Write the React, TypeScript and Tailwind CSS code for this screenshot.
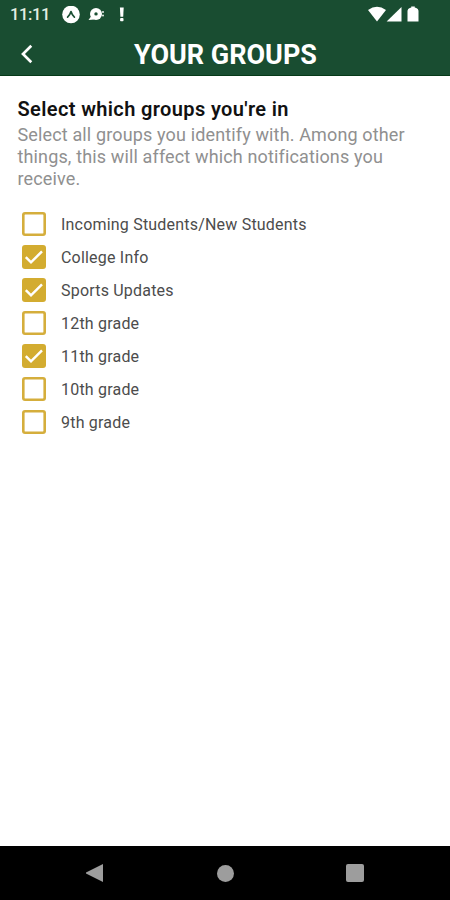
type Group = { label: string; checked: boolean };

const groups: Group[] = [
  { label: "Incoming Students/New Students", checked: false },
  { label: "College Info", checked: true },
  { label: "Sports Updates", checked: true },
  { label: "12th grade", checked: false },
  { label: "11th grade", checked: true },
  { label: "10th grade", checked: false },
  { label: "9th grade", checked: false },
];

function StatusBar() {
  return (
    <div className="flex h-[30px] items-center pl-[10px] pr-[30px]">
      <span className="w-[52px] text-[16.5px] font-medium leading-[30px] tracking-[-0.4px] text-[#e4eee4]">11:11</span>
      <svg className="h-[18px] w-[64px]" viewBox="0 0 64 18" fill="none">
        <circle cx="9" cy="8.5" r="8.8" fill="#fff" />
        <path d="M5.6 11.1 Q8 9 9 5.5 Q10 9 12.4 11.1" stroke="#1b5034" strokeWidth="1.7" strokeLinecap="round" strokeLinejoin="round" />
        <circle cx="34" cy="7.9" r="6" fill="#fff" />
        <path d="M29 10.5L26.5 14L32 13.5Z" fill="#fff" />
        <circle cx="34" cy="7.9" r="1.7" fill="#1b5034" />
        <circle cx="41" cy="6" r="0.9" fill="#fff" />
        <circle cx="41" cy="9.5" r="0.9" fill="#fff" />
        <path d="M57.9 1.5h3.8l-.5 9.3h-2.8z" fill="#fff" />
        <rect x="58.1" y="12.1" width="3.4" height="3.2" rx="0.8" fill="#fff" />
      </svg>
      <svg className="ml-auto h-[18px] w-[52px]" viewBox="0 0 52 18" fill="#fff">
        <path d="M0 4Q9 -2.6 18 4L9 15.500Z" />
        <path d="M33.500 1V15.500H18.600Z" />
        <path d="M43.200 .5h3.600v1.200h1q2.700 1 2.700 3V15.500h-11V4.700q0-2 2.700-3h1z" />
      </svg>
    </div>
  );
}

function Header() {
  return (
    <header className="h-[76px] border-b border-[#063918] bg-[#194d31] text-white">
      <StatusBar />
      <div className="grid h-[46px] grid-cols-[54px_1fr_54px] items-center">
        <svg className="ml-[20px] mt-px h-[20px] w-[14px]" viewBox="0 0 14 20" fill="none">
          <path d="M11.3 1.8L3 10L11.3 18.2" stroke="#fff" strokeWidth="2.7" />
        </svg>
        <h1 className="whitespace-nowrap pl-px pt-1 text-center text-[27px] font-bold leading-[32px]">
          YOUR GROUPS
        </h1>
      </div>
    </header>
  );
}

function Checkbox({ checked }: { checked: boolean }) {
  if (!checked) {
    return <span className="size-6 rounded-[3px] bg-white inset-shadow-[0_0_0_2.6px_#d5ae3c]" />;
  }
  return (
    <span className="size-6 rounded-[3px] bg-[#d3ac30]">
      <svg viewBox="0 0 24 24" fill="none" className="size-6">
        <path d="M3.8 12.2L9 17.3L20 6.4" stroke="#fff" strokeWidth="2.5" />
      </svg>
    </span>
  );
}

function NavBar() {
  return (
    <nav className="flex h-[54px] items-center justify-between bg-black px-[85px]">
      <svg className="h-5 w-[19px]" viewBox="0 0 19 20" fill="#9d9d9d">
        <path d="M18 1v18L1 10.5V9.5Z" />
      </svg>
      <span className="size-[17px] rounded-full bg-[#9d9d9d]" />
      <span className="mr-px size-[18px] rounded-[2px] bg-[#9d9d9d]" />
    </nav>
  );
}

export default function App() {
  return (
    <div className="flex h-[900px] w-[450px] flex-col overflow-hidden bg-white font-['Roboto',sans-serif]">
      <Header />
      <main className="flex-1 pl-[17.5px] pt-[21px]">
        <h2 className="text-[20px] font-semibold leading-[24px] tracking-[0.37px] text-[#111]">Select which groups you're in</h2>
        <p className="mt-[3px] text-[18px] leading-[22px] tracking-[0.14px] text-[#909090]">
          Select all groups you identify with. Among other
          <br />
          things, this will affect which notifications you
          <br />
          receive.
        </p>
        <ul className="mt-[21.5px] flex flex-col gap-[9px] pl-1">
          {groups.map((group) => (
            <li key={group.label} className="flex h-6 items-center gap-[15.5px]">
              <Checkbox checked={group.checked} />
              <span className="whitespace-nowrap pt-[2px] text-[16px] tracking-[0.2px] text-[#4c4c4c]">{group.label}</span>
            </li>
          ))}
        </ul>
      </main>
      <NavBar />
    </div>
  );
}
